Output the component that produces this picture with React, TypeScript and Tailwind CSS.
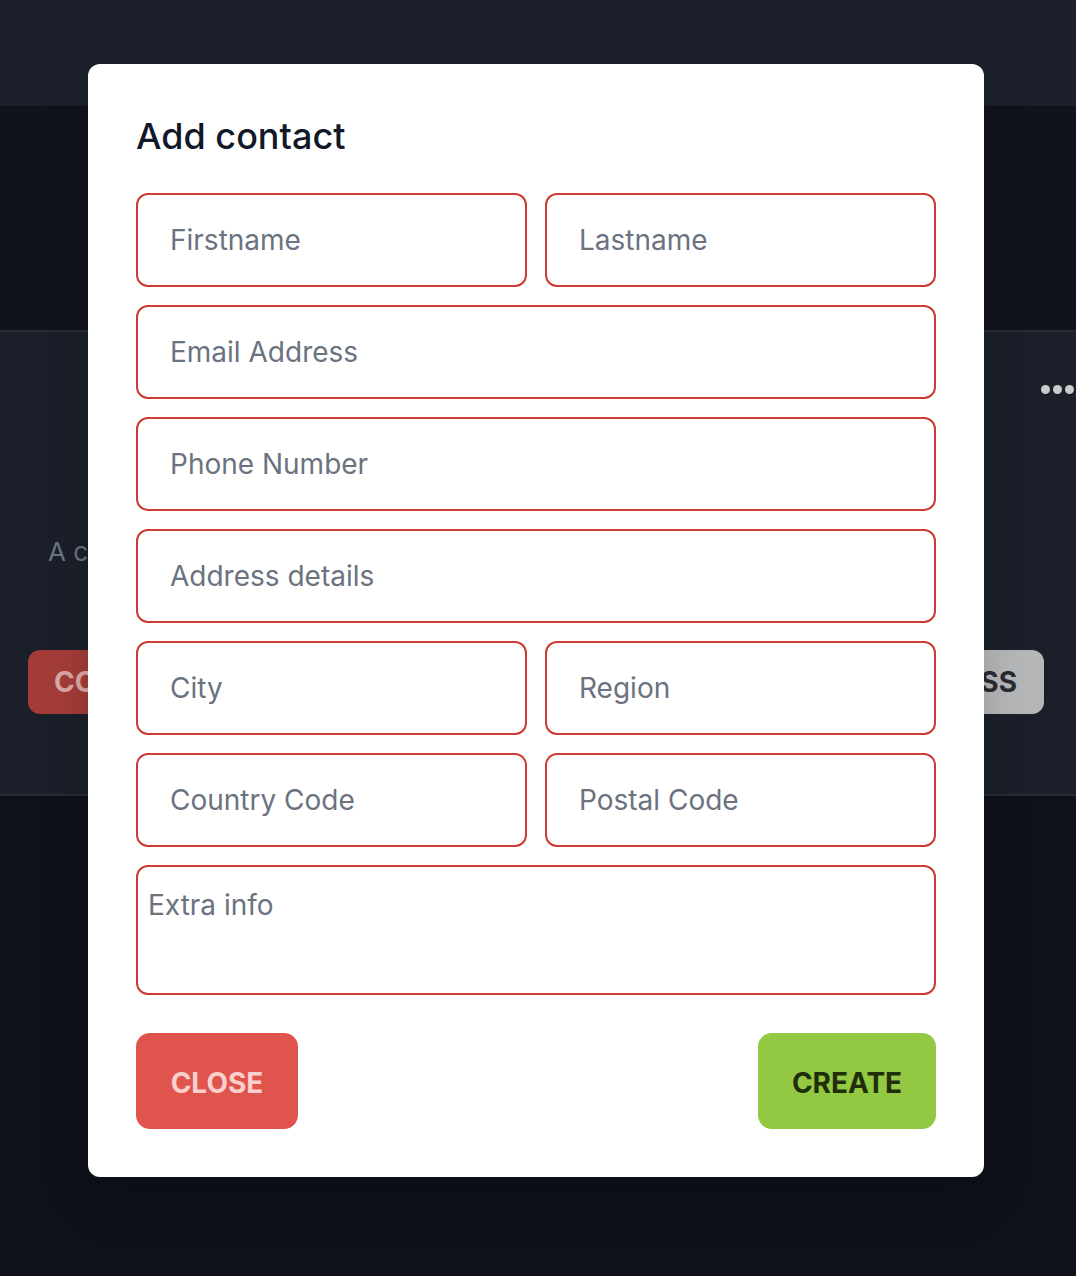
import React from "react";

const inputCls =
  "h-[94px] w-full rounded-xl border-2 border-[#cc3b35] bg-white px-[32px] text-[28px] text-[#374151] placeholder:text-[#6b7280] outline-none";

export default function App() {
  return (
    <div
      className="relative h-[1276px] w-[1076px] overflow-hidden bg-[#0e111a]"
      style={{ fontFamily: "Inter, 'Noto Sans', sans-serif" }}
    >
      {/* background page */}
      <div className="h-[106px] bg-[#1b202a]" />
      <div className="h-[224px] bg-[#10131c]" />
      <div className="h-[466px] border-y-2 border-[#262b34] bg-[#1a1f29] pl-[28px] pr-[32px] pt-[53px]">
        <div className="flex justify-end">
          <div className="mr-[-30px] flex gap-[3px]">
            <span className="h-[9px] w-[9px] rounded-full bg-[#c9cacc]" />
            <span className="h-[9px] w-[9px] rounded-full bg-[#c9cacc]" />
            <span className="h-[9px] w-[9px] rounded-full bg-[#c9cacc]" />
          </div>
        </div>
        <p className="mt-[138px] pl-[20px] text-[26px] text-[#6b7280]">A contact</p>
        <div className="mt-[79px] flex justify-between">
          <div className="flex h-[64px] items-center rounded-xl bg-[#a33c39] px-[26px] text-[28px] font-bold text-[#d9a7a3]">
            CONFIRM
          </div>
          <div className="flex h-[64px] items-center rounded-xl bg-[#b5b6b8] px-[27px] text-[28px] font-bold text-[#2a2b2e]">
            DISMISS
          </div>
        </div>
      </div>

      {/* modal */}
      <div className="absolute left-[88px] top-[64px] w-[896px] rounded-xl bg-white p-[48px] shadow-2xl">
        <h2 className="mb-[33px] text-4xl leading-[48px] font-medium text-[#111827]">Add contact</h2>
        <div className="flex flex-col gap-[18px]">
          <div className="grid grid-cols-2 gap-[18px]">
            <input className={inputCls} placeholder="Firstname" />
            <input className={inputCls} placeholder="Lastname" />
          </div>
          <input className={inputCls} placeholder="Email Address" />
          <input className={inputCls} placeholder="Phone Number" />
          <input className={inputCls} placeholder="Address details" />
          <div className="grid grid-cols-2 gap-[18px]">
            <input className={inputCls} placeholder="City" />
            <input className={inputCls} placeholder="Region" />
          </div>
          <div className="grid grid-cols-2 gap-[18px]">
            <input className={inputCls} placeholder="Country Code" />
            <input className={inputCls} placeholder="Postal Code" />
          </div>
          <textarea
            className="h-[130px] w-full resize-none rounded-xl border-2 border-[#cc3b35] bg-white px-[10px] pt-[17px] pb-[10px] text-[28px] leading-[42px] text-[#374151] placeholder:text-[#6b7280] outline-none"
            placeholder="Extra info"
          />
        </div>
        <div className="mt-[38px] flex justify-between">
          <button className="flex h-[96px] w-[162px] items-center justify-center rounded-[14px] bg-[#df544c] pt-[3px] text-[28px] font-bold text-[#f9d0cc]">
            CLOSE
          </button>
          <button className="flex h-[96px] w-[178px] items-center justify-center rounded-[14px] bg-[#93c843] pt-[3px] text-[28px] font-bold text-[#1f2e0b]">
            CREATE
          </button>
        </div>
      </div>
    </div>
  );
}
